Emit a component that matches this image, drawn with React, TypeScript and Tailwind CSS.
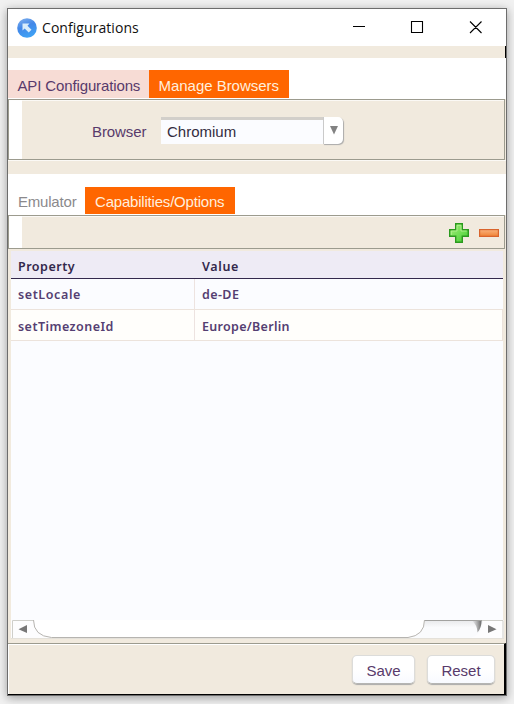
import React from 'react';

const arial = "font-['Liberation_Sans',Arial,sans-serif] text-[15px] leading-[18px] whitespace-nowrap";
const tableText = "font-['Noto_Sans','Open_Sans',sans-serif] text-[12.5px] leading-[18px] whitespace-nowrap";

function TitleBar() {
  return (
    <div className="flex h-[37px] shrink-0 items-center bg-white pl-[9px]">
      <svg width="20" height="20" viewBox="0 0 20 20" className="mt-px shrink-0">
        <defs>
          <linearGradient id="orb" x1="0" y1="0" x2="0.4" y2="1">
            <stop offset="0" stopColor="#86b4ee" />
            <stop offset="0.5" stopColor="#4287e8" />
            <stop offset="1" stopColor="#3fa0f4" />
          </linearGradient>
        </defs>
        <circle cx="10" cy="10" r="9.8" fill="url(#orb)" />
        <path d="M5.500 5.500h7l-2 2.300 4 4-2.800 2.800-4-4-2.200 2z" fill="#d8ecfb" />
      </svg>
      <span className="ml-[5px] font-['Open_Sans','Noto_Sans',sans-serif] text-[14px] leading-[18px] tracking-[0.06px] text-[#111]">
        Configurations
      </span>
      <svg width="136" height="20" viewBox="0 0 136 20" className="mt-[-1px] ml-auto mr-[20px] shrink-0" fill="none" stroke="#000" strokeWidth="1.1">
        <path d="M3 9.500h12M61.500 4.500h11v11h-11zM120 4.500l11.500 11.500M131.500 4.500L120 16" />
      </svg>
    </div>
  );
}

function AddIcon() {
  return (
    <svg width="20" height="20" viewBox="0 0 20 20">
      <defs>
        <linearGradient id="add" x1="0" y1="0" x2="1" y2="1">
          <stop offset="0" stopColor="#a9ef7c" />
          <stop offset="0.6" stopColor="#6bdc50" />
          <stop offset="1" stopColor="#3fc52c" />
        </linearGradient>
      </defs>
      <path d="M6.700.700h6.600v6h6v6.600h-6v6h-6.600v-6h-6v-6.600h6z" fill="url(#add)" stroke="#2b9a1e" strokeWidth="1.400" />
      <path d="M8 8V2.300h4V8h5.700M2.300 12V8H8" fill="none" stroke="#b8f396" strokeWidth=".8" />
    </svg>
  );
}

function RemoveIcon() {
  return (
    <svg width="20" height="20" viewBox="0 0 20 20">
      <defs>
        <linearGradient id="remove" x1="0" y1="0" x2="0" y2="1">
          <stop offset="0" stopColor="#f9b27c" />
          <stop offset="1" stopColor="#f08234" />
        </linearGradient>
      </defs>
      <rect x=".6" y="6.600" width="18.800" height="6.800" fill="url(#remove)" stroke="#d9642c" strokeWidth="1.200" />
    </svg>
  );
}

function ScrollBar() {
  return (
    <svg width="493" height="19" viewBox="0 0 493 19" className="block shrink-0">
      <defs>
        <linearGradient id="track" x1="0" y1="0" x2="0" y2="1">
          <stop offset="0" stopColor="#e9eaec" />
          <stop offset=".4" stopColor="#fafbfd" />
        </linearGradient>
        <linearGradient id="shade" x1="0" y1="0" x2="1" y2="0">
          <stop offset="0" stopColor="#888" stopOpacity="0" />
          <stop offset="1" stopColor="#666" />
        </linearGradient>
      </defs>
      <path d="M0 0h493v19H0z" fill="#fdfdfe" />
      <path d="M413.500.500h58q0 16-14 17.500h-60q16-2 16-17.500z" fill="url(#track)" />
      <path d="M461 1h9.500q0 7-4 11.500-.5-8-5.500-11.500z" fill="url(#shade)" />
      <path d="M1.500 18V.500h21M413.500.500H492v17.500" fill="none" stroke="#cfcfca" />
      <path d="M413.500.500H471" stroke="#a2a2a0" />
      <path d="M22.500 0q0 16 18 17.500H397q16.500-2 16.500-17.500" fill="#fff" stroke="#b6b4b0" />
      <path d="M16 5v8L7.500 9.300z" fill="#777" />
      <path d="M477 5v8l8.500-3.700z" fill="#777" />
      <path d="M0 18.500h493" stroke="#e4e1da" />
    </svg>
  );
}

function PushButton({ children, className }: { children: React.ReactNode; className: string }) {
  return (
    <button
      className={`${arial} ${className} flex h-[29px] items-center justify-center rounded-[5px] border border-[#dcdcda] border-b-[#b5b5b3] bg-gradient-to-b from-white via-white to-[#f8faff] pt-[3px] text-[#583a6b] shadow-[0_1px_1px_#aaa]`}
    >
      {children}
    </button>
  );
}

export default function App() {
  return (
    <div className="h-[704px] w-[514px] overflow-hidden bg-[#f1f1f1] pt-[8px] pl-[7px]">
      <div className="flex h-[688px] w-[500px] flex-col border border-[#6d6d6d] bg-[#f1eade] shadow-[0_2px_9px_rgba(0,0,0,0.35)]">
        <TitleBar />
        <div className="h-3 shrink-0 border-r border-black" />

        <div className="flex h-[41px] shrink-0 items-end bg-white pb-px">
          <div className={`${arial} h-7 w-[141px] bg-[#f7dcd5] pt-[7px] pl-[9.5px] tracking-[-0.13px] text-[#583a6b]`}>API Configurations</div>
          <div className={`${arial} h-7 w-[140px] bg-[#ff6600] pt-[7px] pl-[9.5px] tracking-[-0.03px] text-[#ffeedd]`}>Manage Browsers</div>
        </div>
        <div className="mr-px flex h-[61px] shrink-0 border border-[#9c9b8e]">
          <div className="w-[13px] shrink-0 bg-white" />
          <div className="flex grow items-start border-t border-[#fbf9f5]">
            <span className={`${arial} mt-[22px] ml-[70px] w-[69px] tracking-[-0.1px] text-[#583a6b]`}>Browser</span>
            <div className={`${arial} mt-[16px] h-[27px] w-[162px] border-t-[3px] border-[#d2cfca] bg-[#fbfcff] pt-[3px] pl-[6px] text-[#332c3e]`}>Chromium</div>
            <div className="mt-[16px] flex h-[27px] w-5 items-center justify-center rounded-r-[5px] border-l border-[#cacaca] bg-white shadow-[1px_1px_1px_#aaa]">
              <svg width="8" height="9" viewBox="0 0 8 9"><path d="M0 0h8L4 8.500z" fill="#828282" /></svg>
            </div>
          </div>
        </div>
        <div className="h-[14px] shrink-0 border-t border-[#fbf9f5]" />

        <div className="flex h-[41px] shrink-0 items-end bg-white pb-px">
          <div className={`${arial} h-[27px] w-[77px] pt-[6px] pl-[10px] tracking-[-0.2px] text-[#8b898c]`}>Emulator</div>
          <div className={`${arial} h-[27px] w-[150px] bg-[#ff6600] pt-[6px] pl-[10px] tracking-[-0.2px] text-[#ffeedd]`}>Capabilities/Options</div>
        </div>
        <div className="mr-px flex h-[34px] shrink-0 border border-[#9c9b8e]">
          <div className="w-[13px] shrink-0 bg-white" />
          <div className="flex grow items-center justify-end gap-[10px] border-t border-[#fbf9f5] pr-[5px] pt-px">
            <AddIcon />
            <RemoveIcon />
          </div>
        </div>

        <div className="mt-[2px] mr-[3px] ml-[3px] flex h-[369px] shrink-0 flex-col bg-[#fbfcff]">
          <div className={`${tableText} flex h-[28px] shrink-0 items-center border-b border-[#33284c] bg-[#eeebf5] pt-[4px] pl-[7px] font-semibold text-[#33284c]`}>
            <span className="w-[184px] tracking-[0.5px]">Property</span>
            <span className="tracking-[0.65px]">Value</span>
          </div>
          <div className={`${tableText} flex h-[31px] shrink-0 border-b border-[#ece3dc] font-semibold text-[#553f72]`}>
            <span className="w-[184px] border-r border-[#ede3e0] pt-[7px] pl-[7px] tracking-[0.6px]">setLocale</span>
            <span className="pt-[7px] pl-[7px] tracking-[0.4px]">de-DE</span>
          </div>
          <div className={`${tableText} flex h-[31px] shrink-0 border-b border-r border-[#ece3dc] bg-[#fffefb] font-semibold text-[#553f72]`}>
            <span className="w-[184px] border-r border-[#ede3e0] pt-[8px] pl-[7px] tracking-[0.45px]">setTimezoneId</span>
            <span className="pt-[8px] pl-[7px] tracking-[0.3px]">Europe/Berlin</span>
          </div>
        </div>
        <div className="ml-[3px] h-[23px] shrink-0">
          <ScrollBar />
        </div>
        <div className="flex grow items-start justify-end gap-[12px] border-t border-r-2 border-b border-t-[#9c9b8e] border-r-black border-b-black pt-[11px] pr-[9px] shadow-[inset_1px_1px_0_#fff]">
          <PushButton className="w-[63px]">Save</PushButton>
          <PushButton className="w-[68px]">Reset</PushButton>
        </div>
      </div>
    </div>
  );
}
